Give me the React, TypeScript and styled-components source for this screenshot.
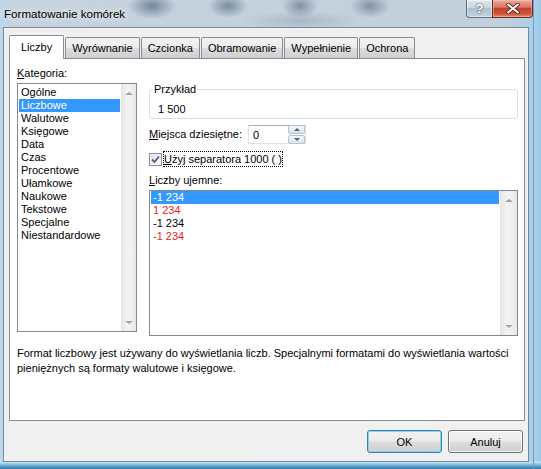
import React from "react";
import styled, { createGlobalStyle } from "styled-components";

const GlobalStyle = createGlobalStyle`
  html, body {
    margin: 0;
    padding: 0;
  }
  body {
    font-family: "Liberation Sans", Arial, sans-serif;
    font-size: 11px;
    color: #000;
  }
`;

const Window = styled.div`
  width: 541px;
  height: 469px;
  box-sizing: border-box;
  display: flex;
  flex-direction: column;
  padding: 0 12px 7px 3px;
  overflow: hidden;
  background:
    radial-gradient(ellipse 24px 13px at 152px 6px, rgba(60, 82, 110, 0.6), transparent),
    radial-gradient(ellipse 20px 12px at 228px 6px, rgba(60, 82, 110, 0.55), transparent),
    radial-gradient(ellipse 18px 12px at 300px 6px, rgba(60, 82, 110, 0.5), transparent),
    radial-gradient(ellipse 20px 12px at 370px 6px, rgba(60, 82, 110, 0.5), transparent),
    radial-gradient(ellipse 60px 10px at 300px 21px, rgba(110, 130, 152, 0.3), transparent),
    linear-gradient(to right, transparent 533px, #6b9fc6 533px, #6b9fc6 534px, transparent 534px),
    linear-gradient(to bottom, transparent 461px, #c4e6f5 462px, #5ea3cc 466px, #2f7cae 469px),
    linear-gradient(to right, #b9d7ee 0px, #c6d3de 12px, #c3d0db 500px, #a9d0ea 535px, #98c8e6 541px);
`;

const TitleBar = styled.div`
  height: 27px;
  display: flex;
  justify-content: space-between;
  align-items: flex-start;
`;

const Title = styled.div`
  font-size: 11.6px;
  line-height: 28px;
  padding-left: 1px;
  color: #000;
  text-shadow: 0 0 6px rgba(255, 255, 255, 0.8), 0 0 10px rgba(255, 255, 255, 0.6);
`;

const CaptionButtons = styled.div`
  display: flex;
  margin-right: -4px;
`;

const HelpButton = styled.div`
  width: 26px;
  height: 18px;
  box-sizing: border-box;
  border: 1px solid rgba(60, 72, 92, 0.75);
  border-top: none;
  border-right: none;
  border-radius: 0 0 0 4px;
  background: linear-gradient(#e1e8ee 0%, #c9d4de 45%, #aebfcd 50%, #c2d1dd 100%);
  box-shadow: inset 0 0 0 1px rgba(255, 255, 255, 0.45);
  display: flex;
  align-items: center;
  justify-content: center;
  color: #fff;
  font-weight: bold;
  font-size: 13px;
  text-shadow: 0 0 1px #3a4a5e, 0 0 2px #3a4a5e;
`;

const CloseButton = styled.div`
  width: 41px;
  height: 18px;
  box-sizing: border-box;
  border: 1px solid #6b2a20;
  border-top: none;
  border-radius: 0 0 4px 0;
  background: linear-gradient(#eaa999 0%, #d8786a 42%, #c2412b 50%, #cd5537 80%, #e08868 100%);
  box-shadow: inset 0 0 0 1px rgba(255, 220, 210, 0.4);
  display: flex;
  align-items: center;
  justify-content: center;
`;

const Client = styled.div`
  flex: 1;
  display: flex;
  flex-direction: column;
  background: #f0f0f0;
  border: 1px solid #7a8a9c;
  padding: 7px 3px 0 5px;
`;

const TabStrip = styled.div`
  display: flex;
  align-items: flex-end;
  height: 23px;
  position: relative;
  z-index: 1;
`;

const Tab = styled.div<{ $active?: boolean }>`
  box-sizing: border-box;
  height: ${({ $active }) => ($active ? "24px" : "21px")};
  margin-bottom: ${({ $active }) => ($active ? "-1px" : "0")};
  margin-right: 1px;
  padding: ${({ $active }) => ($active ? "0 11px" : "0 6px")};
  line-height: ${({ $active }) => ($active ? "22px" : "20px")};
  border: 1px solid #898c95;
  border-bottom: none;
  border-radius: 2px 2px 0 0;
  background: ${({ $active }) =>
    $active ? "#fff" : "linear-gradient(#f3f3f3 0%, #ebebeb 50%, #dddddd 51%, #cfcfcf 100%)"};
  color: #000;
  white-space: nowrap;
`;

const Panel = styled.div`
  flex: 1;
  background: #fff;
  border: 1px solid #898c95;
  padding: 8px 6px 0 7px;
  display: flex;
  flex-direction: column;
`;

const Columns = styled.div`
  display: flex;
  gap: 12px;
  align-items: flex-start;
`;

const LeftCol = styled.div`
  width: 120px;
  display: flex;
  flex-direction: column;
`;

const RightCol = styled.div`
  flex: 1;
  display: flex;
  flex-direction: column;
  padding-top: 16px;
`;

const Label = styled.div<{ $width?: number }>`
  line-height: 13px;
  margin-bottom: 3px;
  min-width: ${({ $width }) => ($width ? `${$width}px` : "0")};
  white-space: nowrap;
`;

const ListBox = styled.div<{ $height: number }>`
  height: ${({ $height }) => $height}px;
  box-sizing: border-box;
  border: 1px solid #828790;
  background: #fff;
  display: flex;
`;

const Items = styled.div<{ $top: number }>`
  flex: 1;
  padding-top: ${({ $top }) => $top}px;
`;

const Item = styled.div<{ $selected?: boolean; $red?: boolean }>`
  height: 13px;
  line-height: 13px;
  margin: 0 1px;
  padding-left: 2px;
  white-space: nowrap;
  background: ${({ $selected }) => ($selected ? "#3399ff" : "transparent")};
  color: ${({ $selected, $red }) => ($selected ? "#fff" : $red ? "#ec1c24" : "#000")};
`;

const ScrollBar = styled.div<{ $width: number }>`
  width: ${({ $width }) => $width}px;
  background: linear-gradient(to right, #e4e4e4 0%, #f3f3f3 40%, #f0f0f0 70%, #e6e6e6 100%);
  display: flex;
  flex-direction: column;
  justify-content: space-between;
`;

const ScrollArrow = styled.div<{ $down?: boolean }>`
  height: 18px;
  display: flex;
  align-items: center;
  justify-content: center;

  &::after {
    content: "";
    width: 0;
    height: 0;
    border-left: 4px solid transparent;
    border-right: 4px solid transparent;
    ${({ $down }) =>
      $down ? "border-top: 3px solid #a3a3a3;" : "border-bottom: 3px solid #a3a3a3;"}
  }
`;

const GroupBox = styled.fieldset`
  margin: 0;
  padding: 0;
  border: 1px solid #d5dfe5;
  border-radius: 3px;
  min-width: 0;
`;

const Legend = styled.legend`
  margin-left: 3px;
  padding: 0 1px;
  line-height: 13px;
`;

const Sample = styled.div`
  line-height: 13px;
  padding: 7px 0 2px 8px;
`;

const SpinRow = styled.div`
  display: flex;
  align-items: center;
  height: 19px;
  margin-top: 6px;

  ${Label} {
    margin-bottom: 0;
  }
`;

const SpinBox = styled.div`
  width: 58px;
  height: 19px;
  box-sizing: border-box;
  border: 1px solid #dbdfe6;
  border-top-color: #abadb3;
  border-left-color: #e2e3ea;
  background: #fff;
  display: flex;
  align-items: center;
  justify-content: space-between;
  padding: 0 0 0 4px;
`;

const Spinner = styled.div`
  display: flex;
  flex-direction: column;
  gap: 1px;
`;

const SpinButton = styled.div<{ $down?: boolean }>`
  width: 15px;
  height: 7px;
  border: 1px solid #b5c3d2;
  border-radius: 2px;
  background: linear-gradient(#f2f6fa, #d9e3ec);
  display: flex;
  align-items: center;
  justify-content: center;

  &::after {
    content: "";
    width: 0;
    height: 0;
    border-left: 3px solid transparent;
    border-right: 3px solid transparent;
    ${({ $down }) =>
      $down ? "border-top: 3px solid #4d6185;" : "border-bottom: 3px solid #4d6185;"}
  }
`;

const CheckRow = styled.div`
  display: flex;
  align-items: center;
  height: 18px;
  margin-top: 6px;
  margin-bottom: 6px;
`;

const CheckBox = styled.div`
  width: 13px;
  height: 13px;
  box-sizing: border-box;
  border: 1px solid #8e8f8f;
  background: linear-gradient(135deg, #d9dbdd 0%, #f4f4f4 70%, #ffffff 100%);
  box-shadow: inset 0 0 0 1px #f4f4f4;
  display: flex;
  align-items: center;
  justify-content: center;
`;

const CheckLabel = styled.div`
  margin-left: 1px;
  padding: 0 1px;
  line-height: 16px;
  outline: 1px dotted #000;
  outline-offset: -1px;
  white-space: nowrap;
`;

const Description = styled.div`
  margin-top: 10px;
  line-height: 15px;
`;

const ButtonRow = styled.div`
  display: flex;
  justify-content: flex-end;
  gap: 6px;
  padding: 9px 2px 8px 0;
`;

const Button = styled.div<{ $default?: boolean }>`
  width: 75px;
  height: 23px;
  box-sizing: border-box;
  border: 1px solid ${({ $default }) => ($default ? "#3c7fb1" : "#707070")};
  border-radius: 3px;
  background: linear-gradient(#f2f2f2 0%, #ebebeb 48%, #dddddd 52%, #cfcfcf 100%);
  box-shadow: inset 0 0 0 1px
    ${({ $default }) => ($default ? "rgba(120, 210, 245, 0.9)" : "rgba(255, 255, 255, 0.75)")};
  display: flex;
  align-items: center;
  justify-content: center;
`;

const categories = [
  "Ogólne",
  "Liczbowe",
  "Walutowe",
  "Księgowe",
  "Data",
  "Czas",
  "Procentowe",
  "Ułamkowe",
  "Naukowe",
  "Tekstowe",
  "Specjalne",
  "Niestandardowe",
];

const negatives = [
  { text: "-1 234", red: false },
  { text: "1 234", red: true },
  { text: "-1 234", red: false },
  { text: "-1 234", red: true },
];

const tabs = ["Liczby", "Wyrównanie", "Czcionka", "Obramowanie", "Wypełnienie", "Ochrona"];

export default function App() {
  return (
    <>
      <GlobalStyle />
      <Window>
        <TitleBar>
          <Title>Formatowanie komórek</Title>
          <CaptionButtons>
            <HelpButton>?</HelpButton>
            <CloseButton>
              <svg width="14" height="11" viewBox="0 0 14 11">
                <path d="M2 1.5 L12 9.5 M12 1.5 L2 9.5" stroke="#5a2018" strokeWidth="3.6" strokeLinecap="round" />
                <path d="M2 1.5 L12 9.5 M12 1.5 L2 9.5" stroke="#fff" strokeWidth="2" strokeLinecap="round" />
              </svg>
            </CloseButton>
          </CaptionButtons>
        </TitleBar>

        <Client>
          <TabStrip>
            {tabs.map((t, i) => (
              <Tab key={t} $active={i === 0}>
                {t}
              </Tab>
            ))}
          </TabStrip>

          <Panel>
            <Columns>
              <LeftCol>
                <Label>
                  <u>K</u>ategoria:
                </Label>
                <ListBox $height={249}>
                  <Items $top={2}>
                    {categories.map((c, i) => (
                      <Item key={c} $selected={i === 1}>
                        {c}
                      </Item>
                    ))}
                  </Items>
                  <ScrollBar $width={15}>
                    <ScrollArrow />
                    <ScrollArrow $down />
                  </ScrollBar>
                </ListBox>
              </LeftCol>

              <RightCol>
                <GroupBox>
                  <Legend>Przykład</Legend>
                  <Sample>1 500</Sample>
                </GroupBox>

                <SpinRow>
                  <Label $width={99}>
                    <u>M</u>iejsca dziesiętne:
                  </Label>
                  <SpinBox>
                    <span>0</span>
                    <Spinner>
                      <SpinButton />
                      <SpinButton $down />
                    </Spinner>
                  </SpinBox>
                </SpinRow>

                <CheckRow>
                  <CheckBox>
                    <svg width="9" height="9" viewBox="0 0 9 9">
                      <path d="M1 4.5 L3.5 7 L8 1.5" fill="none" stroke="#4a5f8e" strokeWidth="1.8" />
                    </svg>
                  </CheckBox>
                  <CheckLabel>
                    <u>U</u>żyj separatora 1000 ( )
                  </CheckLabel>
                </CheckRow>

                <Label>
                  <u>L</u>iczby ujemne:
                </Label>
                <ListBox $height={146}>
                  <Items $top={0}>
                    {negatives.map((n, i) => (
                      <Item key={i} $selected={i === 0} $red={n.red}>
                        {n.text}
                      </Item>
                    ))}
                  </Items>
                  <ScrollBar $width={17}>
                    <ScrollArrow />
                    <ScrollArrow $down />
                  </ScrollBar>
                </ListBox>
              </RightCol>
            </Columns>

            <Description>
              Format liczbowy jest używany do wyświetlania liczb. Specjalnymi formatami do wyświetlania wartości
              <br />
              pieniężnych są formaty walutowe i księgowe.
            </Description>
          </Panel>

          <ButtonRow>
            <Button $default>OK</Button>
            <Button>Anuluj</Button>
          </ButtonRow>
        </Client>
      </Window>
    </>
  );
}
